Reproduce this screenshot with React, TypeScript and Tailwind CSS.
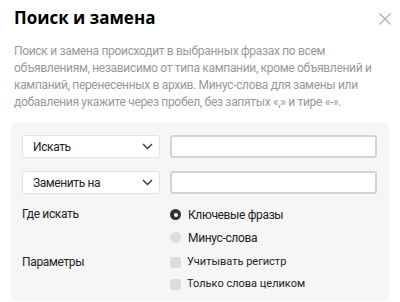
import { useState } from 'react';

function Chevron() {
  return (
    <svg width="11" height="7" viewBox="0 0 11 7" fill="none">
      <path d="M1 1l4.5 4.5L10 1" stroke="#333" strokeWidth="1.3" />
    </svg>
  );
}

function SelectBox({ label }: { label: string }) {
  return (
    <div className="flex h-[23px] w-[138px] items-center justify-between rounded-[3px] border border-[#e2e2e2] bg-white pl-[10px] pr-[6px] text-[12px] tracking-[-0.4px] text-[#222]">
      <span>{label}</span>
      <Chevron />
    </div>
  );
}

function TextBox() {
  return <div className="ml-[10px] h-[23px] w-[207px] rounded-[3px] border-2 border-[#d3d3d3] bg-white" />;
}

export default function App() {
  const [where, setWhere] = useState('keys');

  return (
    <div
      className="relative h-[302px] w-[400px] overflow-hidden bg-white"
      style={{ fontFamily: 'Roboto, "Noto Sans", sans-serif' }}
    >
      <button className="absolute right-[9px] top-[13px]" aria-label="Закрыть">
        <svg width="12" height="12" viewBox="0 0 12 12" className="block">
          <path d="M0.5 0.5l11 11M11.5 0.5l-11 11" stroke="#aaa" strokeWidth="1.1" />
        </svg>
      </button>

      <h1
        className="px-[14px] pt-[6px] text-[17px] font-bold leading-[24px] text-black"
        style={{ fontFamily: '"Open Sans", sans-serif' }}
      >
        Поиск и замена
      </h1>
      <p className="mt-[13px] whitespace-nowrap px-[14px] text-[12px] leading-[17px] tracking-[-0.32px] text-[#999]">
        Поиск и замена происходит в выбранных фразах по всем
        <br />
        объявлениям, независимо от типа кампании, кроме объявлений и
        <br />
        кампаний, перенесенных в архив. Минус-слова для замены или
        <br />
        добавления укажите через пробел, без запятых «,» и тире «-».
      </p>

      <div className="mx-[10px] mt-[11px] rounded-[8px] bg-[#f6f6f6] px-[12px] pb-[6px] pt-[13px]">
        <div className="flex items-center">
          <SelectBox label="Искать" />
          <TextBox />
        </div>
        <div className="mt-[13px] flex items-center">
          <SelectBox label="Заменить на" />
          <TextBox />
        </div>

        <div className="mt-[9px] flex text-[12px] tracking-[-0.35px] text-[#222]">
          <div className="w-[148px] pt-[2px]">Где искать</div>
          <div className="flex flex-col">
            {[
              { id: 'keys', label: 'Ключевые фразы' },
              { id: 'minus', label: 'Минус-слова' },
            ].map((o) => (
              <label key={o.id} className="flex h-[23px] cursor-pointer items-center" onClick={() => setWhere(o.id)}>
                {where === o.id ? (
                  <span className="flex h-[11px] w-[11px] items-center justify-center rounded-full bg-[#333]">
                    <span className="h-[4px] w-[4px] rounded-full bg-white" />
                  </span>
                ) : (
                  <span className="h-[11px] w-[11px] rounded-full bg-[#ddd]" />
                )}
                <span className="ml-[7px]">{o.label}</span>
              </label>
            ))}
          </div>
        </div>

        <div className="mt-[2px] flex text-[11px] text-[#222]">
          <div className="w-[148px] pt-[2px] text-[12px] tracking-[-0.35px]">Параметры</div>
          <div className="flex flex-col">
            {['Учитывать регистр', 'Только слова целиком'].map((t) => (
              <label key={t} className="flex h-[22px] items-center">
                <span className="h-[11px] w-[11px] rounded-[2px] bg-[#ddd]" />
                <span className="ml-[6px]">{t}</span>
              </label>
            ))}
          </div>
        </div>
      </div>
    </div>
  );
}
